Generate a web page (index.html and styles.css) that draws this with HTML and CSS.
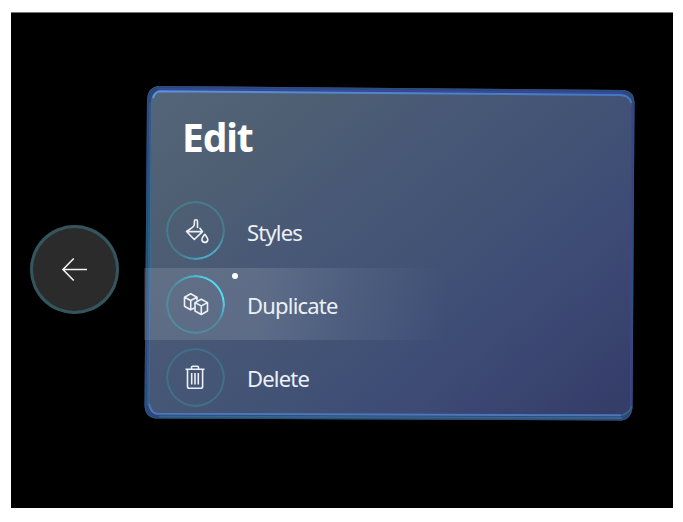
FILE: index.html
```html
<!DOCTYPE html>
<html lang="en">
<head>
<meta charset="utf-8">
<title>Edit</title>
<link rel="stylesheet" href="styles.css">
</head>
<body>
<main class="stage">
  <button class="back" aria-label="Back">
    <svg width="89" height="89" viewBox="0 0 89 89" fill="none">
      <path d="M57 44.500H33M43.700 33.500 33 44.500l10.700 11" stroke="#f2f2f2" stroke-width="1.600"/>
    </svg>
  </button>
  <section class="panel">
    <svg class="glass" width="491" height="336" viewBox="144 85 491 336" fill="none">
      <defs>
        <linearGradient id="face" gradientUnits="userSpaceOnUse" x1="190" y1="60" x2="540" y2="470">
          <stop offset="0" stop-color="#54657a"/>
          <stop offset=".2" stop-color="#4e5f73"/>
          <stop offset=".38" stop-color="#485876"/>
          <stop offset=".55" stop-color="#435375"/>
          <stop offset=".75" stop-color="#3d4b75"/>
          <stop offset="1" stop-color="#353d69"/>
        </linearGradient>
        <linearGradient id="top" x1="0" x2="1" y1="0" y2="0">
          <stop offset="0" stop-color="#5a93df"/>
          <stop offset="1" stop-color="#4378c2"/>
        </linearGradient>
      </defs>
      <path d="M158 86 624 90Q634 91 634.500 102L632.500 408Q631 419.500 622 420.500L155 418.500Q145 417 144.500 406L147 99Q148 87 158 86Z" fill="#2d477b"/>
      <path d="M158 86.500 624 90.500Q633.500 91.500 634 102L632 408Q630.500 419 622 420L155 418Q145 416.500 145 406L147.500 99Q148.500 87.500 158 86.500Z" stroke="#2b527c"/>
      <path d="M159 88.800 623 92.800" stroke="#3e48a0" stroke-width="1.500"/>
      <path d="M160 91.500 624 95Q631.500 96 632 104L630.500 406Q629 414 621 415L157 413.500Q150 412 150 404L152 99Q152.500 92.500 160 91.500Z" fill="url(#face)"/>
      <path d="M149 405 151.500 103Q152 92 160 91" stroke="#3a6c9a" stroke-width="1.500"/>
      <path d="M147.200 405 149.700 103" stroke="#326575"/>
      <path d="M153 98Q155 92 160 91.300L620 95Q629 95 631.500 103" stroke="url(#top)" stroke-width="2"/>
      <path d="M632 106 630.500 406" stroke="#42418a" stroke-width="1.500"/>
      <path d="M149 404Q151 413 157 413.800L621 415.300" stroke="#4b78b8" stroke-width="2"/>
      <path d="M159 416.500 622 418" stroke="#366389" stroke-width="2"/>
      <path d="M621 415.500Q630 413 631.500 406" stroke="#37677f" stroke-width="1.500"/>
    </svg>
    <h1 class="title">Edit</h1>
    <ul class="menu">
      <li class="item">
        <span class="ring ring-low">
          <svg width="30" height="30" viewBox="0 0 30 30" fill="none" stroke="#edf1f5" stroke-width="1.600" stroke-linejoin="round">
            <path d="M16.500 12V5.300Q16.500 3.800 14.900 3.800Q13.400 3.800 13.400 5.300V8Q13.400 10 11.500 11.300L5.500 15.500 13.300 23.500 21.500 15.600 18.500 11.700M5.500 15.600H21.500"/>
            <path d="M23.800 18.300Q20.600 22.400 20.900 24Q21.400 26.400 23.800 26.400Q26.400 26.400 26.800 24Q26.900 22.300 23.800 18.300Z"/>
          </svg>
        </span>
        <span class="label">Styles</span>
      </li>
      <li class="item item-active">
        <span class="ring ring-high">
          <svg width="30" height="30" viewBox="0 0 30 30" fill="none" stroke="#edf1f5" stroke-width="1.600" stroke-linejoin="round">
            <path d="M14 18.800 9.500 20.800 3.500 17.300V8.200L9.700 4.800 16 8.200V11.500M3.500 8.200 9.700 11.500 16 8.200M9.700 11.500V20.500"/>
            <path d="M20.300 10.200 26.500 13.600V22L20.300 25.500 14 22V13.600ZM14 13.600 20.300 16.900 26.500 13.600M20.300 16.900V25.500"/>
          </svg>
        </span>
        <span class="label">Duplicate</span>
        <span class="cursor"></span>
      </li>
      <li class="item">
        <span class="ring">
          <svg width="30" height="30" viewBox="0 0 30 30" fill="none" stroke="#edf1f5" stroke-width="1.600" stroke-linejoin="round">
            <path d="M4.500 7.200H23.500M6.500 7.200V24.500Q6.500 26.300 8.300 26.300H19.800Q21.600 26.300 21.600 24.500V7.200M10.500 7V5.400Q10.500 4.200 11.700 4.200H16.300Q17.500 4.200 17.500 5.400V7M10.700 11V22.500M14 11V22.500M17.300 11V22.500"/>
          </svg>
        </span>
        <span class="label">Delete</span>
      </li>
    </ul>
  </section>
</main>
</body>
</html>
```
FILE: styles.css
```css
* { box-sizing: border-box; }

body {
  margin: 0;
  background: #fff;
  font-family: "Noto Sans", "Open Sans", sans-serif;
}

.stage {
  display: flex;
  width: 662px;
  height: 496px;
  margin: 12px 10px 14px 11px;
  padding: 72px 0 0 19px;
  gap: 25px;
  background: #000;
  border-top: 1px solid #777;
}

.back {
  width: 89px;
  height: 89px;
  margin-top: 140px;
  padding: 0;
  border: 0;
  border-radius: 50%;
  background: #2b2b2b;
  box-shadow: inset 0 0 0 3px #33565e;
}

.back svg { display: block; }

.panel {
  position: relative;
  width: 491px;
  height: 336px;
}

.glass {
  position: absolute;
  inset: 0;
}

.title {
  position: relative;
  margin: 0;
  padding: 25px 0 0 38px;
  color: #fff;
  font-size: 39px;
  line-height: 54px;
  font-weight: 700;
  letter-spacing: -1.1px;
}

.menu {
  position: relative;
  margin: 30px 0 0;
  padding: 0;
  list-style: none;
}

.item {
  position: relative;
  display: flex;
  align-items: center;
  height: 73.400px;
  padding-left: 22px;
  gap: 22px;
}

.item-active::before {
  content: "";
  position: absolute;
  inset: 1px 190px 1px 0;
  background: linear-gradient(90deg, rgba(200, 208, 215, .16), rgba(200, 208, 215, .18) 38%, rgba(160, 175, 205, .12) 65%, transparent);
}

.ring {
  position: relative;
  display: grid;
  place-items: center;
  width: 59px;
  height: 59px;
}

.ring::before {
  content: "";
  position: absolute;
  inset: 0;
  border-radius: 50%;
  background: #416f87;
  mask: radial-gradient(circle, transparent 26.800px, #000 27.600px);
}

.ring-low::before {
  background: conic-gradient(#477b8c 0 95deg, #4ba7c4 135deg 165deg, #477b8c 215deg);
}

.ring-high::before {
  background: conic-gradient(#4dbad0, #55d9f3 40deg 80deg, #508a9c 125deg 310deg, #4dbad0);
}

.label {
  position: relative;
  padding-top: 2px;
  color: #edf1f5;
  font-size: 22px;
  line-height: 30px;
  letter-spacing: -.8px;
}

.cursor {
  position: absolute;
  left: 88px;
  top: 6px;
  width: 6px;
  height: 6px;
  border-radius: 50%;
  background: #fff;
}
```
